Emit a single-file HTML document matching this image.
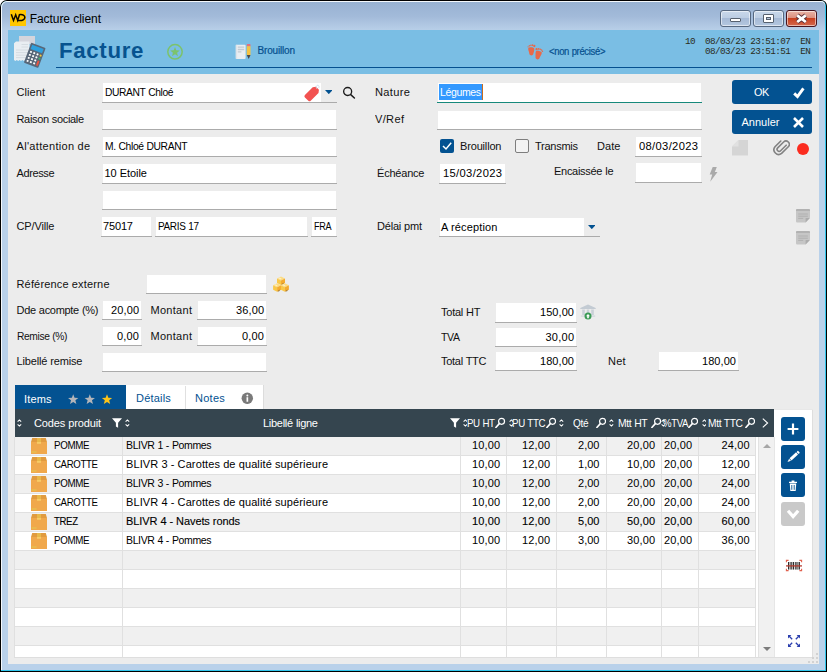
<!DOCTYPE html>
<html><head><meta charset="utf-8"><title>Facture client</title><style>
html,body{margin:0;padding:0;background:#fff;}
body{width:827px;height:672px;position:relative;overflow:hidden;font-family:"Liberation Sans",sans-serif;font-size:11px;}
.t{position:absolute;white-space:pre;}
.f{position:absolute;background:#fff;}
.fb{position:absolute;height:1px;}
.btn{position:absolute;background:#035291;border-radius:3px;}
</style></head><body>
<div style="position:absolute;left:0;top:0;width:827px;height:672px;background:#000;border-radius:7px 6px 0 0"></div>
<div style="position:absolute;left:1px;top:1px;width:825px;height:670px;background:#31c6ec;border-radius:6px 5px 0 0"></div>
<div style="position:absolute;left:1px;top:1px;width:824px;height:669px;background:#f4f8fc;border-radius:6px 4px 0 0"></div>
<div style="position:absolute;left:2px;top:2px;width:823px;height:668px;border-radius:5px 4px 0 0;background:linear-gradient(#98b2d2 0px,#a2bad9 14px,#b8cfe8 28px,#b9d1ea 60px,#b9d1ea 100%)"></div>
<div style="position:absolute;left:8px;top:30px;width:811px;height:634px;background:#ececec"></div>
<div style="position:absolute;left:10px;top:10px;width:16px;height:16px;background:#ffc600"></div>
<svg style="position:absolute;left:10px;top:10px" width="16" height="16" viewBox="0 0 16 16"><path d="M1.3 4.2 L3.5 10.4 L5.7 4.8 L7.7 10.4 L9.4 5" fill="none" stroke="#0c0800" stroke-width="1.5" stroke-linejoin="miter"/><path d="M8.8 4.7 C13.4 3.9 15.3 6 14.7 8 C14.1 10.3 11.2 10.9 7.4 10.4" fill="none" stroke="#0c0800" stroke-width="1.5"/></svg>
<span class="t" style="left:29.75px;top:13.24px;font-size:12px;line-height:12px;color:#000;letter-spacing:-0.065px;word-spacing:0.065px;">Facture client</span>
<div style="position:absolute;left:720px;top:10px;width:31px;height:17px;box-sizing:border-box;border:1px solid #566880;border-radius:3px;background:linear-gradient(#c9d8ea 0%,#bccde3 46%,#a6bad6 50%,#b4c7df 100%);box-shadow:inset 0 0 0 1px rgba(255,255,255,0.55)"></div>
<div style="position:absolute;left:753px;top:10px;width:31px;height:17px;box-sizing:border-box;border:1px solid #566880;border-radius:3px;background:linear-gradient(#c9d8ea 0%,#bccde3 46%,#a6bad6 50%,#b4c7df 100%);box-shadow:inset 0 0 0 1px rgba(255,255,255,0.55)"></div>
<div style="position:absolute;left:786px;top:10px;width:31px;height:17px;box-sizing:border-box;border:1px solid #47141e;border-radius:3px;background:linear-gradient(#e9b4a6 0%,#dc8f7e 46%,#c8401f 50%,#d4684e 100%);box-shadow:inset 0 0 0 1px rgba(255,255,255,0.55)"></div>
<div style="position:absolute;left:730px;top:18px;width:11px;height:4px;box-sizing:border-box;background:#fff;border:1px solid #56606e;border-radius:1px"></div>
<div style="position:absolute;left:763px;top:14px;width:11px;height:9px;box-sizing:border-box;background:#fff;border:1px solid #56606e;border-radius:1px"></div>
<div style="position:absolute;left:766px;top:17px;width:5px;height:3px;box-sizing:border-box;background:#b6c6dc;border:1px solid #56606e"></div>
<svg style="position:absolute;left:795px;top:13px" width="13" height="11" viewBox="0 0 13 11"><path d="M2.2 2.4 L10.8 9 M10.8 2.4 L2.2 9" stroke="#5a3038" stroke-width="4.6" stroke-linecap="butt"/><path d="M2.2 2.4 L10.8 9 M10.8 2.4 L2.2 9" stroke="#fff" stroke-width="2.8" stroke-linecap="butt"/></svg>
<div style="position:absolute;left:8px;top:30px;width:811px;height:44px;background:#7abee4"></div>
<div style="position:absolute;left:56px;top:67px;width:756px;height:1px;background:#05508f"></div>
<span class="t" style="left:58.82px;top:40.70px;font-size:21.5px;line-height:21.5px;color:#07538f;letter-spacing:0.645px;word-spacing:-0.645px;font-weight:700;transform:scaleX(1.0348);transform-origin:0 0;">Facture</span>
<span class="t" style="left:257.55px;top:46.33px;font-size:10px;line-height:10px;color:#06508f;letter-spacing:-0.183px;word-spacing:0.183px;-webkit-text-stroke:0.2px #06508f;">Brouillon</span>
<span class="t" style="left:548.55px;top:46.53px;font-size:10px;line-height:10px;color:#06508f;letter-spacing:-0.360px;word-spacing:0.360px;transform:scaleX(0.9499);transform-origin:0 0;-webkit-text-stroke:0.2px #06508f;">&lt;non précisé&gt;</span>
<span class="t" style="left:685.08px;top:36.73px;font-size:9.3px;line-height:9.3px;color:#2a2c20;letter-spacing:-0.574px;font-family:'Liberation Mono',monospace;white-space:pre;">10  08/03/23 23:51:07  EN</span>
<span class="t" style="left:685.08px;top:46.73px;font-size:9.3px;line-height:9.3px;color:#2a2c20;letter-spacing:-0.574px;font-family:'Liberation Mono',monospace;white-space:pre;">    08/03/23 23:51:51  EN</span>
<svg style="position:absolute;left:166px;top:43px" width="18" height="18" viewBox="0 0 18 18"><circle cx="9" cy="8.8" r="7.2" fill="none" stroke="#7cc36c" stroke-width="1.5"/><polygon points="9.00,4.10 10.29,7.32 13.76,7.55 11.09,9.78 11.94,13.15 9.00,11.30 6.06,13.15 6.91,9.78 4.24,7.55 7.71,7.32" fill="#7cc36c"/></svg>
<svg style="position:absolute;left:235px;top:43px" width="17" height="17" viewBox="0 0 17 17">
<rect x="0.8" y="1.8" width="9.8" height="14.2" rx="0.9" fill="#e9eef2"/><rect x="0.8" y="1.8" width="1.3" height="14.2" fill="#dde3e8"/>
<path d="M2.8 4.2 H9.2 M2.8 6.5 H9.2 M2.8 8.8 H6.4" stroke="#c3cad1" stroke-width="1.3"/>
<rect x="11.8" y="1" width="3.7" height="2.6" rx="0.8" fill="#e2707c"/><rect x="11.8" y="3.2" width="3.7" height="8.8" fill="#f6c343"/><path d="M11.8 12 H15.5 L13.65 15.9 Z" fill="#4a4a4a"/></svg>
<svg style="position:absolute;left:525px;top:42px" width="20" height="20" viewBox="0 0 20 20"><g fill="#e8694a"><path d="M3.2 6.6 C3.2 4.8 9.3 4.8 9.3 6.9 C9.3 9.2 8.5 10.6 8.3 12.1 C8.1 13.8 4.6 13.8 4.4 12.1 C4.2 10.2 3.2 8.6 3.2 6.6 Z"/><circle cx="9.3" cy="4" r="1.15"/><circle cx="7.5" cy="3.2" r="0.85"/><circle cx="5.9" cy="3.2" r="0.8"/><circle cx="4.4" cy="3.8" r="0.75"/><circle cx="3.1" cy="4.8" r="0.65"/><g transform="rotate(12 13 13)"><path d="M10.1 10.3 C10.1 8.3 16.3 8.3 16.3 10.3 C16.3 12.4 15.3 14 15.1 16 C14.9 17.9 11.3 17.9 11.1 16 C10.9 14.2 10.1 12.6 10.1 10.3 Z"/><circle cx="10.4" cy="7.6" r="1.15"/><circle cx="12.3" cy="6.9" r="0.85"/><circle cx="13.9" cy="6.9" r="0.8"/><circle cx="15.4" cy="7.4" r="0.75"/><circle cx="16.6" cy="8.4" r="0.65"/></g></g></svg>
<svg style="position:absolute;left:8px;top:30px" width="50" height="44" viewBox="0 0 50 44">
<rect x="11" y="6" width="16" height="8" fill="#d4d5dc"/>
<path d="M6 13.2 L8 11.6 H21.5 V31 L20 30 L18.6 31 L17.2 30 L15.8 31 L14.4 30 L13 31 L11.6 30 L10.2 31 L8.8 30 L7.4 31 L6 30 Z" fill="#e9eef2"/>
<path d="M13.5 14.5 H20 M13.5 17 H20 M8 20 H20 M8 22.6 H20 M8 25.2 H20 M8 27.6 H18" stroke="#d3d9df" stroke-width="0.9"/>
<g transform="translate(23.3 12.6) rotate(20.5)"><rect x="0" y="0" width="15.4" height="21.4" rx="1" fill="#586778"/><rect x="1.6" y="1.6" width="12.2" height="4.6" fill="#2d9fdd"/><rect x="2.0" y="8.0" width="1.9" height="1.8" rx="0.3" fill="#fff"/><rect x="5.5" y="8.0" width="1.9" height="1.8" rx="0.3" fill="#fff"/><rect x="9.0" y="8.0" width="1.9" height="1.8" rx="0.3" fill="#fff"/><rect x="2.0" y="11.2" width="1.9" height="1.8" rx="0.3" fill="#fff"/><rect x="5.5" y="11.2" width="1.9" height="1.8" rx="0.3" fill="#fff"/><rect x="9.0" y="11.2" width="1.9" height="1.8" rx="0.3" fill="#fff"/><rect x="2.0" y="14.4" width="1.9" height="1.8" rx="0.3" fill="#fff"/><rect x="5.5" y="14.4" width="1.9" height="1.8" rx="0.3" fill="#fff"/><rect x="9.0" y="14.4" width="1.9" height="1.8" rx="0.3" fill="#fff"/><rect x="2.0" y="17.6" width="1.9" height="1.8" rx="0.3" fill="#fff"/><rect x="5.5" y="17.6" width="1.9" height="1.8" rx="0.3" fill="#fff"/><rect x="9.0" y="17.6" width="1.9" height="1.8" rx="0.3" fill="#fff"/>
<rect x="12.3" y="8" width="1.9" height="1.8" rx="0.3" fill="#f4c838"/><rect x="12.3" y="11.2" width="1.9" height="1.8" rx="0.3" fill="#3db86e"/><rect x="12.3" y="14.4" width="1.9" height="5.2" rx="0.4" fill="#ea5440"/></g></svg>
<span class="t" style="left:16.50px;top:86.69px;font-size:11px;line-height:11px;color:#111;letter-spacing:0.075px;word-spacing:-0.075px;">Client</span>
<span class="t" style="left:16.50px;top:113.69px;font-size:11px;line-height:11px;color:#111;letter-spacing:-0.337px;word-spacing:0.337px;">Raison sociale</span>
<span class="t" style="left:16.50px;top:140.69px;font-size:11px;line-height:11px;color:#111;letter-spacing:0.317px;word-spacing:-0.317px;">Al'attention de</span>
<span class="t" style="left:16.50px;top:167.69px;font-size:11px;line-height:11px;color:#111;letter-spacing:-0.393px;word-spacing:0.393px;">Adresse</span>
<span class="t" style="left:16.50px;top:220.69px;font-size:11px;line-height:11px;color:#111;letter-spacing:-0.134px;word-spacing:0.134px;">CP/Ville</span>
<span class="t" style="left:16.50px;top:278.69px;font-size:11px;line-height:11px;color:#111;letter-spacing:0.167px;word-spacing:-0.167px;">Référence externe</span>
<span class="t" style="left:16.50px;top:304.69px;font-size:11px;line-height:11px;color:#111;letter-spacing:-0.299px;word-spacing:0.299px;">Dde acompte (%)</span>
<span class="t" style="left:16.50px;top:330.69px;font-size:11px;line-height:11px;color:#111;letter-spacing:-0.396px;word-spacing:0.396px;transform:scaleX(0.9303);transform-origin:0 0;">Remise (%)</span>
<span class="t" style="left:16.50px;top:355.69px;font-size:11px;line-height:11px;color:#111;letter-spacing:-0.156px;word-spacing:0.156px;">Libellé remise</span>
<span class="t" style="left:150.50px;top:304.69px;font-size:11px;line-height:11px;color:#111;letter-spacing:0.292px;word-spacing:-0.292px;">Montant</span>
<span class="t" style="left:150.50px;top:330.69px;font-size:11px;line-height:11px;color:#111;letter-spacing:0.292px;word-spacing:-0.292px;">Montant</span>
<div class="f" style="left:103px;top:83px;width:218px;height:19px"></div>
<div class="fb" style="left:102px;top:102px;width:235px;background:#ababab"></div>
<div class="f" style="left:103px;top:110px;width:233px;height:19px"></div>
<div class="fb" style="left:102px;top:129px;width:235px;background:#ababab"></div>
<div class="f" style="left:103px;top:137px;width:233px;height:19px"></div>
<div class="fb" style="left:102px;top:156px;width:235px;background:#ababab"></div>
<div class="f" style="left:103px;top:164px;width:233px;height:19px"></div>
<div class="fb" style="left:102px;top:183px;width:235px;background:#ababab"></div>
<div class="f" style="left:103px;top:191px;width:233px;height:18px"></div>
<div class="fb" style="left:102px;top:209px;width:235px;background:#ababab"></div>
<div class="f" style="left:102px;top:217px;width:49px;height:19px"></div>
<div class="fb" style="left:101px;top:236px;width:51px;background:#ababab"></div>
<div class="f" style="left:156px;top:217px;width:151px;height:19px"></div>
<div class="fb" style="left:155px;top:236px;width:153px;background:#ababab"></div>
<div class="f" style="left:312px;top:217px;width:24px;height:19px"></div>
<div class="fb" style="left:311px;top:236px;width:26px;background:#ababab"></div>
<div class="f" style="left:147px;top:275px;width:119px;height:18px"></div>
<div class="fb" style="left:146px;top:293px;width:121px;background:#ababab"></div>
<div class="f" style="left:103px;top:301px;width:38px;height:18px"></div>
<div class="fb" style="left:102px;top:319px;width:40px;background:#ababab"></div>
<div class="f" style="left:198px;top:301px;width:68px;height:18px"></div>
<div class="fb" style="left:197px;top:319px;width:70px;background:#ababab"></div>
<div class="f" style="left:103px;top:327px;width:38px;height:18px"></div>
<div class="fb" style="left:102px;top:345px;width:40px;background:#ababab"></div>
<div class="f" style="left:198px;top:327px;width:68px;height:18px"></div>
<div class="fb" style="left:197px;top:345px;width:70px;background:#ababab"></div>
<div class="f" style="left:103px;top:353px;width:163px;height:18px"></div>
<div class="fb" style="left:102px;top:371px;width:165px;background:#ababab"></div>
<span class="t" style="left:104.50px;top:86.69px;font-size:11px;line-height:11px;color:#000;letter-spacing:-0.396px;word-spacing:0.396px;transform:scaleX(0.9323);transform-origin:0 0;">DURANT Chloé</span>
<span class="t" style="left:104.50px;top:140.69px;font-size:11px;line-height:11px;color:#000;letter-spacing:-0.396px;word-spacing:0.396px;transform:scaleX(0.9359);transform-origin:0 0;">M. Chloé DURANT</span>
<span class="t" style="left:104.50px;top:167.69px;font-size:11px;line-height:11px;color:#000;letter-spacing:-0.045px;word-spacing:0.045px;">10 Etoile</span>
<span class="t" style="left:103.10px;top:220.89px;font-size:11px;line-height:11px;color:#000;letter-spacing:-0.173px;word-spacing:0.173px;">75017</span>
<span class="t" style="left:157.50px;top:220.89px;font-size:11px;line-height:11px;color:#000;letter-spacing:-0.396px;word-spacing:0.396px;transform:scaleX(0.9086);transform-origin:0 0;">PARIS 17</span>
<span class="t" style="left:313.50px;top:220.89px;font-size:11px;line-height:11px;color:#000;letter-spacing:-0.396px;word-spacing:0.396px;transform:scaleX(0.8252);transform-origin:0 0;">FRA</span>
<span class="t" style="left:111.00px;top:304.69px;font-size:11px;line-height:11px;color:#000;letter-spacing:0.117px;word-spacing:-0.117px;">20,00</span>
<span class="t" style="left:236.00px;top:304.69px;font-size:11px;line-height:11px;color:#000;letter-spacing:0.117px;word-spacing:-0.117px;">36,00</span>
<span class="t" style="left:117.00px;top:330.69px;font-size:11px;line-height:11px;color:#000;letter-spacing:0.193px;word-spacing:-0.193px;">0,00</span>
<span class="t" style="left:242.00px;top:330.69px;font-size:11px;line-height:11px;color:#000;letter-spacing:0.193px;word-spacing:-0.193px;">0,00</span>
<span class="t" style="left:375.00px;top:86.69px;font-size:11px;line-height:11px;color:#111;letter-spacing:0.330px;word-spacing:-0.330px;transform:scaleX(1.0092);transform-origin:0 0;">Nature</span>
<span class="t" style="left:375.00px;top:114.49px;font-size:11px;line-height:11px;color:#111;letter-spacing:0.330px;word-spacing:-0.330px;transform:scaleX(1.0057);transform-origin:0 0;">V/Ref</span>
<span class="t" style="left:377.00px;top:167.69px;font-size:11px;line-height:11px;color:#111;letter-spacing:-0.205px;word-spacing:0.205px;">Échéance</span>
<span class="t" style="left:377.00px;top:221.19px;font-size:11px;line-height:11px;color:#111;letter-spacing:-0.210px;word-spacing:0.210px;">Délai pmt</span>
<span class="t" style="left:460.00px;top:140.79px;font-size:11px;line-height:11px;color:#111;letter-spacing:-0.164px;word-spacing:0.164px;">Brouillon</span>
<span class="t" style="left:535.00px;top:140.79px;font-size:11px;line-height:11px;color:#111;letter-spacing:-0.261px;word-spacing:0.261px;">Transmis</span>
<span class="t" style="left:597.00px;top:140.79px;font-size:11px;line-height:11px;color:#111;letter-spacing:0.083px;word-spacing:-0.083px;">Date</span>
<span class="t" style="left:554.00px;top:166.19px;font-size:11px;line-height:11px;color:#111;letter-spacing:-0.287px;word-spacing:0.287px;">Encaissée le</span>
<span class="t" style="left:441.00px;top:306.69px;font-size:11px;line-height:11px;color:#111;letter-spacing:-0.245px;word-spacing:0.245px;">Total HT</span>
<span class="t" style="left:441.00px;top:331.69px;font-size:11px;line-height:11px;color:#111;letter-spacing:-0.396px;word-spacing:0.396px;transform:scaleX(0.9603);transform-origin:0 0;">TVA</span>
<span class="t" style="left:441.00px;top:355.69px;font-size:11px;line-height:11px;color:#111;letter-spacing:-0.283px;word-spacing:0.283px;">Total TTC</span>
<span class="t" style="left:608.00px;top:355.69px;font-size:11px;line-height:11px;color:#111;letter-spacing:0.188px;word-spacing:-0.188px;">Net</span>
<div class="f" style="left:438px;top:83px;width:263px;height:19px"></div>
<div class="fb" style="left:437px;top:102px;width:265px;background:#17897b"></div>
<div class="f" style="left:438px;top:111px;width:263px;height:18px"></div>
<div class="fb" style="left:437px;top:129px;width:265px;background:#ababab"></div>
<div class="f" style="left:636px;top:137px;width:65px;height:19px"></div>
<div class="fb" style="left:635px;top:156px;width:67px;background:#ababab"></div>
<div class="f" style="left:440px;top:164px;width:65px;height:19px"></div>
<div class="fb" style="left:439px;top:183px;width:67px;background:#ababab"></div>
<div class="f" style="left:636px;top:163px;width:65px;height:19px"></div>
<div class="fb" style="left:635px;top:182px;width:67px;background:#ababab"></div>
<div class="f" style="left:440px;top:218px;width:144px;height:18px"></div>
<div class="fb" style="left:439px;top:236px;width:161px;background:#ababab"></div>
<div class="f" style="left:496px;top:303px;width:80px;height:19px"></div>
<div class="fb" style="left:495px;top:322px;width:82px;background:#ababab"></div>
<div class="f" style="left:496px;top:328px;width:80px;height:18px"></div>
<div class="fb" style="left:495px;top:346px;width:82px;background:#ababab"></div>
<div class="f" style="left:496px;top:352px;width:80px;height:18px"></div>
<div class="fb" style="left:495px;top:370px;width:82px;background:#ababab"></div>
<div class="f" style="left:659px;top:352px;width:79px;height:18px"></div>
<div class="fb" style="left:658px;top:370px;width:81px;background:#ababab"></div>
<div style="position:absolute;left:439px;top:84px;width:43px;height:16px;background:#3399ff"></div>
<div style="position:absolute;left:482px;top:84px;width:1px;height:16px;background:#cc6d1e"></div>
<span class="t" style="left:440.00px;top:86.69px;font-size:11px;line-height:11px;color:#fff;letter-spacing:-0.396px;word-spacing:0.396px;transform:scaleX(0.9559);transform-origin:0 0;">Légumes</span>
<span class="t" style="left:639.00px;top:140.69px;font-size:11px;line-height:11px;color:#000;letter-spacing:0.330px;word-spacing:-0.330px;transform:scaleX(1.0167);transform-origin:0 0;">08/03/2023</span>
<span class="t" style="left:443.00px;top:167.69px;font-size:11px;line-height:11px;color:#000;letter-spacing:0.330px;word-spacing:-0.330px;transform:scaleX(1.0167);transform-origin:0 0;">15/03/2023</span>
<span class="t" style="left:441.00px;top:221.69px;font-size:11px;line-height:11px;color:#000;letter-spacing:0.161px;word-spacing:-0.161px;">A réception</span>
<span class="t" style="left:540.00px;top:306.69px;font-size:11px;line-height:11px;color:#000;letter-spacing:0.069px;word-spacing:-0.069px;">150,00</span>
<span class="t" style="left:545.50px;top:331.69px;font-size:11px;line-height:11px;color:#000;letter-spacing:0.242px;word-spacing:-0.242px;">30,00</span>
<span class="t" style="left:540.00px;top:355.69px;font-size:11px;line-height:11px;color:#000;letter-spacing:0.069px;word-spacing:-0.069px;">180,00</span>
<span class="t" style="left:702.00px;top:355.69px;font-size:11px;line-height:11px;color:#000;letter-spacing:0.069px;word-spacing:-0.069px;">180,00</span>
<div class="btn" style="left:732px;top:80px;width:80px;height:24px"></div>
<div class="btn" style="left:732px;top:110px;width:80px;height:24px"></div>
<span class="t" style="left:754.10px;top:87.19px;font-size:11px;line-height:11px;color:#fff;letter-spacing:-0.396px;word-spacing:0.396px;transform:scaleX(0.9864);transform-origin:0 0;">OK</span>
<span class="t" style="left:741.50px;top:117.19px;font-size:11px;line-height:11px;color:#fff;letter-spacing:0.013px;word-spacing:-0.013px;">Annuler</span>
<svg style="position:absolute;left:792px;top:86px" width="14" height="14" viewBox="0 0 14 14"><path d="M2.2 7.4 L5.5 10.6 L11.4 2.4" fill="none" stroke="#fff" stroke-width="2.9" stroke-linecap="butt" stroke-linejoin="miter"/></svg>
<svg style="position:absolute;left:792px;top:116px" width="14" height="14" viewBox="0 0 14 14"><path d="M2 2 L11 11 M11 2 L2 11" fill="none" stroke="#fff" stroke-width="2.6" stroke-linecap="butt"/></svg>
<div style="position:absolute;left:440px;top:139px;width:14px;height:14px;border-radius:2px;background:#035291"></div>
<svg style="position:absolute;left:440px;top:139px" width="14" height="14" viewBox="0 0 14 14"><path d="M3 7 L6 10 L11.2 3.8" fill="none" stroke="#fff" stroke-width="1.5"/></svg>
<div style="position:absolute;left:515px;top:139px;width:12px;height:12px;border-radius:2px;background:#f3f3f3;border:1px solid #7e7e7e"></div>
<svg style="position:absolute;left:324.8px;top:90px" width="7.6" height="4.2" viewBox="0 0 8 4.4"><path d="M0 0 H8 L4 4.4 Z" fill="#035291"/></svg>
<svg style="position:absolute;left:587.8px;top:225px" width="7.6" height="4.2" viewBox="0 0 8 4.4"><path d="M0 0 H8 L4 4.4 Z" fill="#035291"/></svg>
<svg style="position:absolute;left:302px;top:83px" width="20" height="20" viewBox="0 0 20 20">
<g transform="rotate(45 10 10.7)"><path d="M5.9 5.6 L7.9 3 H12.1 L14.1 5.6 V16.6 a1.7 1.7 0 0 1 -1.7 1.7 H7.6 a1.7 1.7 0 0 1 -1.7 -1.7 Z" fill="#f25251"/></g>
<path d="M14.6 5.6 C13.4 3.2 15.4 1.4 16.6 2.6 C17.4 3.4 17 4.6 16.4 5" fill="none" stroke="#c9dcef" stroke-width="0.9"/></svg>
<svg style="position:absolute;left:341px;top:85px" width="16" height="16" viewBox="0 0 16 16"><circle cx="6.65" cy="6.5" r="4" fill="none" stroke="#1c1c1c" stroke-width="1.35"/><path d="M9.7 9.6 L13.4 13" stroke="#1c1c1c" stroke-width="1.5" stroke-linecap="round"/></svg>
<svg style="position:absolute;left:732px;top:140px" width="16" height="16" viewBox="0 0 16 16"><path d="M6.5 0 H16 V15.6 H0 V6.5 Z" fill="#d5d5d5"/><path d="M0 6.5 H6.5 V0 Z" fill="#e1e1e1"/></svg>
<svg style="position:absolute;left:773px;top:139px" width="17" height="17" viewBox="0 0 17 17"><path d="M13.2 6.2 L7.6 11.8 a2 2 0 0 1 -2.9 -2.9 L10.6 3 a3.3 3.3 0 0 1 4.7 4.7 L8.6 14.4 a4.7 4.7 0 0 1 -6.6 -6.6 L7.8 2" fill="none" stroke="#828282" stroke-width="1.6" stroke-linecap="round"/></svg>
<div style="position:absolute;left:796.8px;top:142.6px;width:12.4px;height:12.4px;border-radius:50%;background:#fb2c1f"></div>
<svg style="position:absolute;left:709.4px;top:167px" width="9.2" height="15.2" viewBox="0 0 10 17"><path d="M4 0 H8.6 L6.4 5.6 H9.4 L1.2 16.6 L3.4 8.4 H0.6 Z" fill="#aaaaaa"/></svg>
<svg style="position:absolute;left:796px;top:209px" width="14" height="13.5" viewBox="0 0 14 13.5"><path d="M1.3 0 H12.7 a1.3 1.3 0 0 1 1.3 1.3 V8.6 L9.6 13.5 H1.3 A1.3 1.3 0 0 1 0 12.2 V1.3 A1.3 1.3 0 0 1 1.3 0 Z" fill="#c6c6c6"/><path d="M1.3 0 H12.7 a1.3 1.3 0 0 1 1.3 1.3 V1.9 H0 V1.3 A1.3 1.3 0 0 1 1.3 0 Z" fill="#b2b2b2"/><path d="M9.6 13.5 V9 H14 Z" fill="#adadad"/><path d="M2.2 5 H11.8 M2.2 7.2 H11.8 M2.2 9.4 H7.2" stroke="#aeaeae" stroke-width="0.9"/></svg>
<svg style="position:absolute;left:796px;top:231px" width="14" height="13.5" viewBox="0 0 14 13.5"><path d="M1.3 0 H12.7 a1.3 1.3 0 0 1 1.3 1.3 V8.6 L9.6 13.5 H1.3 A1.3 1.3 0 0 1 0 12.2 V1.3 A1.3 1.3 0 0 1 1.3 0 Z" fill="#c6c6c6"/><path d="M1.3 0 H12.7 a1.3 1.3 0 0 1 1.3 1.3 V1.9 H0 V1.3 A1.3 1.3 0 0 1 1.3 0 Z" fill="#b2b2b2"/><path d="M9.6 13.5 V9 H14 Z" fill="#adadad"/><path d="M2.2 5 H11.8 M2.2 7.2 H11.8 M2.2 9.4 H7.2" stroke="#aeaeae" stroke-width="0.9"/></svg>
<svg style="position:absolute;left:272px;top:276px" width="18" height="17" viewBox="0 0 18 17"><path d="M9 0.40000000000000036 L13 2.4000000000000004 L9 4.4 L5 2.4000000000000004 Z" fill="#fcdc82"/><path d="M5 2.4000000000000004 L9 4.4 V9.0 L5 7.0 Z" fill="#f9c847"/><path d="M13 2.4000000000000004 L9 4.4 V9.0 L13 7.0 Z" fill="#f4ab2e"/><path d="M9.8 8.0 L11.6 6.800000000000001 V8.200000000000001 L9.8 9.0 Z" fill="#8a6a30" opacity="0.75"/><path d="M7.4 1.4000000000000004 L9.6 2.6000000000000005 L8.4 3.4000000000000004 L6.2 2.2 Z" fill="#fff3cf" opacity="0.8"/><path d="M5.1 7.199999999999999 L9.1 9.2 L5.1 11.2 L1.0999999999999996 9.2 Z" fill="#fcdc82"/><path d="M1.0999999999999996 9.2 L5.1 11.2 V15.799999999999999 L1.0999999999999996 13.799999999999999 Z" fill="#f9c847"/><path d="M9.1 9.2 L5.1 11.2 V15.799999999999999 L9.1 13.799999999999999 Z" fill="#f4ab2e"/><path d="M5.8999999999999995 14.799999999999999 L7.699999999999999 13.6 V15.0 L5.8999999999999995 15.799999999999999 Z" fill="#8a6a30" opacity="0.75"/><path d="M3.4999999999999996 8.2 L5.699999999999999 9.399999999999999 L4.5 10.2 L2.3 9.0 Z" fill="#fff3cf" opacity="0.8"/><path d="M12.9 7.199999999999999 L16.9 9.2 L12.9 11.2 L8.9 9.2 Z" fill="#fcdc82"/><path d="M8.9 9.2 L12.9 11.2 V15.799999999999999 L8.9 13.799999999999999 Z" fill="#f9c847"/><path d="M16.9 9.2 L12.9 11.2 V15.799999999999999 L16.9 13.799999999999999 Z" fill="#f4ab2e"/><path d="M13.700000000000001 14.799999999999999 L15.5 13.6 V15.0 L13.700000000000001 15.799999999999999 Z" fill="#8a6a30" opacity="0.75"/><path d="M11.3 8.2 L13.5 9.399999999999999 L12.3 10.2 L10.100000000000001 9.0 Z" fill="#fff3cf" opacity="0.8"/></svg>
<svg style="position:absolute;left:580px;top:304px" width="16" height="16" viewBox="0 0 16 16">
<path d="M8 0.6 L15.7 4 V4.9 H0.3 V4 Z" fill="#c3cbd3"/><path d="M2.2 5.4 H4.8 V11 H2.2 Z M6.8 5.4 H9.2 V11 H6.8 Z M11.2 5.4 H13.8 V11 H11.2 Z" fill="#c9d0d7"/><path d="M0.8 11.4 H15.2 V12.8 H0.8 Z" fill="#d3d9de"/>
<circle cx="8" cy="12.1" r="3.5" fill="#3c9b56"/><path d="M8 10 L10 12.2 H8.8 V14.2 H7.2 V12.2 H6 Z" fill="#fff"/></svg>
<div style="position:absolute;left:15px;top:409px;width:798px;height:249px;background:#fff"></div>
<div style="position:absolute;left:812px;top:409px;width:1px;height:249px;background:#dedede"></div>
<div style="position:absolute;left:14px;top:657px;width:799px;height:1px;background:#dedede"></div>
<div style="position:absolute;left:774px;top:409px;width:39px;height:1px;background:#e8e8e8"></div>
<div style="position:absolute;left:15px;top:385px;width:111px;height:24px;background:#035291"></div>
<div style="position:absolute;left:126px;top:385px;width:138px;height:24px;background:#fff"></div>
<div style="position:absolute;left:185px;top:386px;width:1px;height:23px;background:#e0e0e0"></div>
<div style="position:absolute;left:263px;top:385px;width:1px;height:24px;background:#dcdcdc"></div>
<span class="t" style="left:24.00px;top:393.69px;font-size:11px;line-height:11px;color:#fff;letter-spacing:0.148px;word-spacing:-0.148px;">Items</span>
<span class="t" style="left:136.00px;top:392.79px;font-size:11px;line-height:11px;color:#035291;letter-spacing:0.196px;word-spacing:-0.196px;">Détails</span>
<span class="t" style="left:195.00px;top:392.79px;font-size:11px;line-height:11px;color:#035291;letter-spacing:0.263px;word-spacing:-0.263px;">Notes</span>
<svg style="position:absolute;left:60px;top:390px" width="60" height="18" viewBox="0 0 60 18"><polygon points="13.20,4.20 14.55,7.74 18.34,7.93 15.39,10.31 16.37,13.97 13.20,11.90 10.03,13.97 11.01,10.31 8.06,7.93 11.85,7.74" fill="#b3b5b9"/><polygon points="29.80,4.20 31.15,7.74 34.94,7.93 31.99,10.31 32.97,13.97 29.80,11.90 26.63,13.97 27.61,10.31 24.66,7.93 28.45,7.74" fill="#b3b5b9"/><polygon points="47.00,4.20 48.35,7.74 52.14,7.93 49.19,10.31 50.17,13.97 47.00,11.90 43.83,13.97 44.81,10.31 41.86,7.93 45.65,7.74" fill="#fcc419"/></svg>
<svg style="position:absolute;left:241.4px;top:391.6px" width="12.8" height="12.8" viewBox="0 0 13 13"><circle cx="6.4" cy="6.4" r="5.8" fill="#7a7a7a"/><rect x="5.6" y="5.3" width="1.7" height="4.6" fill="#fff"/><circle cx="6.45" cy="3.5" r="1" fill="#fff"/></svg>
<div style="position:absolute;left:15px;top:409px;width:759px;height:28px;background:#35454f"></div>
<span class="t" style="left:34.00px;top:417.79px;font-size:11px;line-height:11px;color:#fff;letter-spacing:-0.136px;word-spacing:0.136px;">Codes produit</span>
<span class="t" style="left:263.00px;top:417.79px;font-size:11px;line-height:11px;color:#fff;letter-spacing:-0.283px;word-spacing:0.283px;">Libellé ligne</span>
<span class="t" style="left:467.00px;top:417.79px;font-size:11px;line-height:11px;color:#fff;letter-spacing:-0.396px;word-spacing:0.396px;transform:scaleX(0.8802);transform-origin:0 0;">PU HT</span>
<span class="t" style="left:512.00px;top:417.79px;font-size:11px;line-height:11px;color:#fff;letter-spacing:-0.396px;word-spacing:0.396px;transform:scaleX(0.8828);transform-origin:0 0;">PU TTC</span>
<span class="t" style="left:573.00px;top:417.79px;font-size:11px;line-height:11px;color:#fff;letter-spacing:-0.396px;word-spacing:0.396px;transform:scaleX(0.9149);transform-origin:0 0;">Qté</span>
<span class="t" style="left:617.90px;top:417.79px;font-size:11px;line-height:11px;color:#fff;letter-spacing:-0.396px;word-spacing:0.396px;transform:scaleX(0.9454);transform-origin:0 0;">Mtt HT</span>
<span class="t" style="left:662.50px;top:417.79px;font-size:11px;line-height:11px;color:#fff;letter-spacing:-0.396px;word-spacing:0.396px;transform:scaleX(0.8741);transform-origin:0 0;">%TVA</span>
<span class="t" style="left:708.10px;top:417.79px;font-size:11px;line-height:11px;color:#fff;letter-spacing:-0.396px;word-spacing:0.396px;transform:scaleX(0.9298);transform-origin:0 0;">Mtt TTC</span>
<svg style="position:absolute;left:17px;top:418.6px" width="4.8" height="8" viewBox="0 0 5 9"><path d="M0.5 3 L2.5 1 L4.5 3 M0.5 6 L2.5 8 L4.5 6" fill="none" stroke="#fff" stroke-width="1.2"/></svg>
<svg style="position:absolute;left:125px;top:418.6px" width="4.8" height="8" viewBox="0 0 5 9"><path d="M0.5 3 L2.5 1 L4.5 3 M0.5 6 L2.5 8 L4.5 6" fill="none" stroke="#fff" stroke-width="1.2"/></svg>
<svg style="position:absolute;left:462.5px;top:418.6px" width="4.8" height="8" viewBox="0 0 5 9"><path d="M0.5 3 L2.5 1 L4.5 3 M0.5 6 L2.5 8 L4.5 6" fill="none" stroke="#fff" stroke-width="1.2"/></svg>
<svg style="position:absolute;left:508.5px;top:418.6px" width="4.8" height="8" viewBox="0 0 5 9"><path d="M0.5 3 L2.5 1 L4.5 3 M0.5 6 L2.5 8 L4.5 6" fill="none" stroke="#fff" stroke-width="1.2"/></svg>
<svg style="position:absolute;left:559px;top:418.6px" width="4.8" height="8" viewBox="0 0 5 9"><path d="M0.5 3 L2.5 1 L4.5 3 M0.5 6 L2.5 8 L4.5 6" fill="none" stroke="#fff" stroke-width="1.2"/></svg>
<svg style="position:absolute;left:609px;top:418.6px" width="4.8" height="8" viewBox="0 0 5 9"><path d="M0.5 3 L2.5 1 L4.5 3 M0.5 6 L2.5 8 L4.5 6" fill="none" stroke="#fff" stroke-width="1.2"/></svg>
<svg style="position:absolute;left:661px;top:418.6px" width="4.8" height="8" viewBox="0 0 5 9"><path d="M0.5 3 L2.5 1 L4.5 3 M0.5 6 L2.5 8 L4.5 6" fill="none" stroke="#fff" stroke-width="1.2"/></svg>
<svg style="position:absolute;left:701.5px;top:418.6px" width="4.8" height="8" viewBox="0 0 5 9"><path d="M0.5 3 L2.5 1 L4.5 3 M0.5 6 L2.5 8 L4.5 6" fill="none" stroke="#fff" stroke-width="1.2"/></svg>
<svg style="position:absolute;left:112px;top:418px" width="10" height="10" viewBox="0 0 10 10"><path d="M0 0.3 H10 L6.1 4.8 V9.8 L3.9 8.6 V4.8 Z" fill="#fff"/></svg>
<svg style="position:absolute;left:450px;top:418px" width="10" height="10" viewBox="0 0 10 10"><path d="M0 0.3 H10 L6.1 4.8 V9.8 L3.9 8.6 V4.8 Z" fill="#fff"/></svg>
<svg style="position:absolute;left:495.4px;top:417.3px" width="10.5" height="11.2" viewBox="0 0 11 12"><circle cx="6.9" cy="4.6" r="3.2" fill="none" stroke="#fff" stroke-width="1.3"/><path d="M4.5 7.1 L0.8 11.2" stroke="#fff" stroke-width="1.7" stroke-linecap="round"/></svg>
<svg style="position:absolute;left:545.9px;top:417.3px" width="10.5" height="11.2" viewBox="0 0 11 12"><circle cx="6.9" cy="4.6" r="3.2" fill="none" stroke="#fff" stroke-width="1.3"/><path d="M4.5 7.1 L0.8 11.2" stroke="#fff" stroke-width="1.7" stroke-linecap="round"/></svg>
<svg style="position:absolute;left:595.9px;top:417.3px" width="10.5" height="11.2" viewBox="0 0 11 12"><circle cx="6.9" cy="4.6" r="3.2" fill="none" stroke="#fff" stroke-width="1.3"/><path d="M4.5 7.1 L0.8 11.2" stroke="#fff" stroke-width="1.7" stroke-linecap="round"/></svg>
<svg style="position:absolute;left:651.4px;top:417.3px" width="10.5" height="11.2" viewBox="0 0 11 12"><circle cx="6.9" cy="4.6" r="3.2" fill="none" stroke="#fff" stroke-width="1.3"/><path d="M4.5 7.1 L0.8 11.2" stroke="#fff" stroke-width="1.7" stroke-linecap="round"/></svg>
<svg style="position:absolute;left:687.9px;top:417.3px" width="10.5" height="11.2" viewBox="0 0 11 12"><circle cx="6.9" cy="4.6" r="3.2" fill="none" stroke="#fff" stroke-width="1.3"/><path d="M4.5 7.1 L0.8 11.2" stroke="#fff" stroke-width="1.7" stroke-linecap="round"/></svg>
<svg style="position:absolute;left:744.9px;top:417.3px" width="10.5" height="11.2" viewBox="0 0 11 12"><circle cx="6.9" cy="4.6" r="3.2" fill="none" stroke="#fff" stroke-width="1.3"/><path d="M4.5 7.1 L0.8 11.2" stroke="#fff" stroke-width="1.7" stroke-linecap="round"/></svg>
<svg style="position:absolute;left:762px;top:418px" width="7" height="10" viewBox="0 0 7 10"><path d="M0.8 0.6 L5.6 5 L0.8 9.4" fill="none" stroke="#fff" stroke-width="1.1"/></svg>
<div style="position:absolute;left:15px;top:437px;width:740px;height:18px;background:#f0f0f0"></div>
<div style="position:absolute;left:15px;top:455px;width:741px;height:1px;background:#e0e0e0"></div>
<div style="position:absolute;left:15px;top:456px;width:740px;height:18px;background:#fff"></div>
<div style="position:absolute;left:15px;top:474px;width:741px;height:1px;background:#e0e0e0"></div>
<div style="position:absolute;left:15px;top:475px;width:740px;height:18px;background:#f0f0f0"></div>
<div style="position:absolute;left:15px;top:493px;width:741px;height:1px;background:#e0e0e0"></div>
<div style="position:absolute;left:15px;top:494px;width:740px;height:18px;background:#fff"></div>
<div style="position:absolute;left:15px;top:512px;width:741px;height:1px;background:#e0e0e0"></div>
<div style="position:absolute;left:15px;top:513px;width:740px;height:18px;background:#f0f0f0"></div>
<div style="position:absolute;left:15px;top:531px;width:741px;height:1px;background:#e0e0e0"></div>
<div style="position:absolute;left:15px;top:532px;width:740px;height:18px;background:#fff"></div>
<div style="position:absolute;left:15px;top:550px;width:741px;height:1px;background:#e0e0e0"></div>
<div style="position:absolute;left:15px;top:551px;width:740px;height:18px;background:#f0f0f0"></div>
<div style="position:absolute;left:15px;top:569px;width:741px;height:1px;background:#e0e0e0"></div>
<div style="position:absolute;left:15px;top:570px;width:740px;height:18px;background:#fff"></div>
<div style="position:absolute;left:15px;top:588px;width:741px;height:1px;background:#e0e0e0"></div>
<div style="position:absolute;left:15px;top:589px;width:740px;height:18px;background:#f0f0f0"></div>
<div style="position:absolute;left:15px;top:607px;width:741px;height:1px;background:#e0e0e0"></div>
<div style="position:absolute;left:15px;top:608px;width:740px;height:18px;background:#fff"></div>
<div style="position:absolute;left:15px;top:626px;width:741px;height:1px;background:#e0e0e0"></div>
<div style="position:absolute;left:15px;top:627px;width:740px;height:18px;background:#f0f0f0"></div>
<div style="position:absolute;left:15px;top:645px;width:741px;height:1px;background:#e0e0e0"></div>
<div style="position:absolute;left:15px;top:646px;width:740px;height:11px;background:#fff"></div>
<div style="position:absolute;left:14px;top:437px;width:1px;height:220px;background:#e0e0e0"></div>
<div style="position:absolute;left:755px;top:437px;width:1px;height:220px;background:#e0e0e0"></div>
<div style="position:absolute;left:122px;top:437px;width:1px;height:220px;background:#e0e0e0"></div>
<div style="position:absolute;left:460px;top:437px;width:1px;height:220px;background:#e0e0e0"></div>
<div style="position:absolute;left:506px;top:437px;width:1px;height:220px;background:#e0e0e0"></div>
<div style="position:absolute;left:556px;top:437px;width:1px;height:220px;background:#e0e0e0"></div>
<div style="position:absolute;left:606px;top:437px;width:1px;height:220px;background:#e0e0e0"></div>
<div style="position:absolute;left:661px;top:437px;width:1px;height:220px;background:#e0e0e0"></div>
<div style="position:absolute;left:698px;top:437px;width:1px;height:220px;background:#e0e0e0"></div>
<svg style="position:absolute;left:31px;top:438px" width="16" height="16" viewBox="0 0 16 16"><path d="M0 4 L1.2 0 H14.8 L16 4 Z" fill="#e19b3f"/><rect x="0" y="4" width="16" height="12" fill="#f0a84c"/><rect x="6" y="0" width="4" height="4" fill="#e8b84a"/><rect x="6" y="4" width="4" height="1.8" fill="#f7cb66"/><rect x="0.6" y="13" width="5" height="2" fill="#e9b94f"/></svg>
<span class="t" style="left:54.00px;top:439.69px;font-size:11px;line-height:11px;color:#000;letter-spacing:-0.396px;word-spacing:0.396px;transform:scaleX(0.8880);transform-origin:0 0;">POMME</span>
<span class="t" style="left:126.00px;top:439.69px;font-size:11px;line-height:11px;color:#000;letter-spacing:-0.396px;word-spacing:0.396px;transform:scaleX(0.9565);transform-origin:0 0;">BLIVR 1 - Pommes</span>
<span class="t" style="left:472.00px;top:439.69px;font-size:11px;line-height:11px;color:#000;letter-spacing:0.117px;word-spacing:-0.117px;">10,00</span>
<span class="t" style="left:522.00px;top:439.69px;font-size:11px;line-height:11px;color:#000;letter-spacing:0.117px;word-spacing:-0.117px;">12,00</span>
<span class="t" style="left:578.00px;top:439.69px;font-size:11px;line-height:11px;color:#000;letter-spacing:0.026px;word-spacing:-0.026px;">2,00</span>
<span class="t" style="left:627.00px;top:439.69px;font-size:11px;line-height:11px;color:#000;letter-spacing:0.117px;word-spacing:-0.117px;">20,00</span>
<span class="t" style="left:664.00px;top:439.69px;font-size:11px;line-height:11px;color:#000;letter-spacing:0.117px;word-spacing:-0.117px;">20,00</span>
<span class="t" style="left:721.50px;top:439.69px;font-size:11px;line-height:11px;color:#000;letter-spacing:0.117px;word-spacing:-0.117px;">24,00</span>
<svg style="position:absolute;left:31px;top:457px" width="16" height="16" viewBox="0 0 16 16"><path d="M0 4 L1.2 0 H14.8 L16 4 Z" fill="#e19b3f"/><rect x="0" y="4" width="16" height="12" fill="#f0a84c"/><rect x="6" y="0" width="4" height="4" fill="#e8b84a"/><rect x="6" y="4" width="4" height="1.8" fill="#f7cb66"/><rect x="0.6" y="13" width="5" height="2" fill="#e9b94f"/></svg>
<span class="t" style="left:54.00px;top:458.69px;font-size:11px;line-height:11px;color:#000;letter-spacing:-0.396px;word-spacing:0.396px;transform:scaleX(0.8767);transform-origin:0 0;">CAROTTE</span>
<span class="t" style="left:126.00px;top:458.69px;font-size:11px;line-height:11px;color:#000;letter-spacing:0.118px;word-spacing:-0.118px;">BLIVR 3 - Carottes de qualité supérieure</span>
<span class="t" style="left:472.00px;top:458.69px;font-size:11px;line-height:11px;color:#000;letter-spacing:0.117px;word-spacing:-0.117px;">10,00</span>
<span class="t" style="left:522.00px;top:458.69px;font-size:11px;line-height:11px;color:#000;letter-spacing:0.117px;word-spacing:-0.117px;">12,00</span>
<span class="t" style="left:578.00px;top:458.69px;font-size:11px;line-height:11px;color:#000;letter-spacing:0.026px;word-spacing:-0.026px;">1,00</span>
<span class="t" style="left:627.00px;top:458.69px;font-size:11px;line-height:11px;color:#000;letter-spacing:0.117px;word-spacing:-0.117px;">10,00</span>
<span class="t" style="left:664.00px;top:458.69px;font-size:11px;line-height:11px;color:#000;letter-spacing:0.117px;word-spacing:-0.117px;">20,00</span>
<span class="t" style="left:721.50px;top:458.69px;font-size:11px;line-height:11px;color:#000;letter-spacing:0.117px;word-spacing:-0.117px;">12,00</span>
<svg style="position:absolute;left:31px;top:476px" width="16" height="16" viewBox="0 0 16 16"><path d="M0 4 L1.2 0 H14.8 L16 4 Z" fill="#e19b3f"/><rect x="0" y="4" width="16" height="12" fill="#f0a84c"/><rect x="6" y="0" width="4" height="4" fill="#e8b84a"/><rect x="6" y="4" width="4" height="1.8" fill="#f7cb66"/><rect x="0.6" y="13" width="5" height="2" fill="#e9b94f"/></svg>
<span class="t" style="left:54.00px;top:477.69px;font-size:11px;line-height:11px;color:#000;letter-spacing:-0.396px;word-spacing:0.396px;transform:scaleX(0.8880);transform-origin:0 0;">POMME</span>
<span class="t" style="left:126.00px;top:477.69px;font-size:11px;line-height:11px;color:#000;letter-spacing:-0.396px;word-spacing:0.396px;transform:scaleX(0.9565);transform-origin:0 0;">BLIVR 3 - Pommes</span>
<span class="t" style="left:472.00px;top:477.69px;font-size:11px;line-height:11px;color:#000;letter-spacing:0.117px;word-spacing:-0.117px;">10,00</span>
<span class="t" style="left:522.00px;top:477.69px;font-size:11px;line-height:11px;color:#000;letter-spacing:0.117px;word-spacing:-0.117px;">12,00</span>
<span class="t" style="left:578.00px;top:477.69px;font-size:11px;line-height:11px;color:#000;letter-spacing:0.026px;word-spacing:-0.026px;">2,00</span>
<span class="t" style="left:627.00px;top:477.69px;font-size:11px;line-height:11px;color:#000;letter-spacing:0.117px;word-spacing:-0.117px;">20,00</span>
<span class="t" style="left:664.00px;top:477.69px;font-size:11px;line-height:11px;color:#000;letter-spacing:0.117px;word-spacing:-0.117px;">20,00</span>
<span class="t" style="left:721.50px;top:477.69px;font-size:11px;line-height:11px;color:#000;letter-spacing:0.117px;word-spacing:-0.117px;">24,00</span>
<svg style="position:absolute;left:31px;top:495px" width="16" height="16" viewBox="0 0 16 16"><path d="M0 4 L1.2 0 H14.8 L16 4 Z" fill="#e19b3f"/><rect x="0" y="4" width="16" height="12" fill="#f0a84c"/><rect x="6" y="0" width="4" height="4" fill="#e8b84a"/><rect x="6" y="4" width="4" height="1.8" fill="#f7cb66"/><rect x="0.6" y="13" width="5" height="2" fill="#e9b94f"/></svg>
<span class="t" style="left:54.00px;top:496.69px;font-size:11px;line-height:11px;color:#000;letter-spacing:-0.396px;word-spacing:0.396px;transform:scaleX(0.8767);transform-origin:0 0;">CAROTTE</span>
<span class="t" style="left:126.00px;top:496.69px;font-size:11px;line-height:11px;color:#000;letter-spacing:0.118px;word-spacing:-0.118px;">BLIVR 4 - Carottes de qualité supérieure</span>
<span class="t" style="left:472.00px;top:496.69px;font-size:11px;line-height:11px;color:#000;letter-spacing:0.117px;word-spacing:-0.117px;">10,00</span>
<span class="t" style="left:522.00px;top:496.69px;font-size:11px;line-height:11px;color:#000;letter-spacing:0.117px;word-spacing:-0.117px;">12,00</span>
<span class="t" style="left:578.00px;top:496.69px;font-size:11px;line-height:11px;color:#000;letter-spacing:0.026px;word-spacing:-0.026px;">2,00</span>
<span class="t" style="left:627.00px;top:496.69px;font-size:11px;line-height:11px;color:#000;letter-spacing:0.117px;word-spacing:-0.117px;">20,00</span>
<span class="t" style="left:664.00px;top:496.69px;font-size:11px;line-height:11px;color:#000;letter-spacing:0.117px;word-spacing:-0.117px;">20,00</span>
<span class="t" style="left:721.50px;top:496.69px;font-size:11px;line-height:11px;color:#000;letter-spacing:0.117px;word-spacing:-0.117px;">24,00</span>
<svg style="position:absolute;left:31px;top:514px" width="16" height="16" viewBox="0 0 16 16"><path d="M0 4 L1.2 0 H14.8 L16 4 Z" fill="#e19b3f"/><rect x="0" y="4" width="16" height="12" fill="#f0a84c"/><rect x="6" y="0" width="4" height="4" fill="#e8b84a"/><rect x="6" y="4" width="4" height="1.8" fill="#f7cb66"/><rect x="0.6" y="13" width="5" height="2" fill="#e9b94f"/></svg>
<span class="t" style="left:54.00px;top:515.69px;font-size:11px;line-height:11px;color:#000;letter-spacing:-0.396px;word-spacing:0.396px;transform:scaleX(0.8713);transform-origin:0 0;-webkit-text-stroke:0.12px #000;">TREZ</span>
<span class="t" style="left:126.00px;top:515.69px;font-size:11px;line-height:11px;color:#000;letter-spacing:-0.092px;word-spacing:0.092px;-webkit-text-stroke:0.12px #000;">BLIVR 4 - Navets ronds</span>
<span class="t" style="left:472.00px;top:515.69px;font-size:11px;line-height:11px;color:#000;letter-spacing:0.117px;word-spacing:-0.117px;-webkit-text-stroke:0.12px #000;">10,00</span>
<span class="t" style="left:522.00px;top:515.69px;font-size:11px;line-height:11px;color:#000;letter-spacing:0.117px;word-spacing:-0.117px;-webkit-text-stroke:0.12px #000;">12,00</span>
<span class="t" style="left:578.00px;top:515.69px;font-size:11px;line-height:11px;color:#000;letter-spacing:0.026px;word-spacing:-0.026px;-webkit-text-stroke:0.12px #000;">5,00</span>
<span class="t" style="left:627.00px;top:515.69px;font-size:11px;line-height:11px;color:#000;letter-spacing:0.117px;word-spacing:-0.117px;-webkit-text-stroke:0.12px #000;">50,00</span>
<span class="t" style="left:664.00px;top:515.69px;font-size:11px;line-height:11px;color:#000;letter-spacing:0.117px;word-spacing:-0.117px;-webkit-text-stroke:0.12px #000;">20,00</span>
<span class="t" style="left:721.50px;top:515.69px;font-size:11px;line-height:11px;color:#000;letter-spacing:0.117px;word-spacing:-0.117px;-webkit-text-stroke:0.12px #000;">60,00</span>
<svg style="position:absolute;left:31px;top:533px" width="16" height="16" viewBox="0 0 16 16"><path d="M0 4 L1.2 0 H14.8 L16 4 Z" fill="#e19b3f"/><rect x="0" y="4" width="16" height="12" fill="#f0a84c"/><rect x="6" y="0" width="4" height="4" fill="#e8b84a"/><rect x="6" y="4" width="4" height="1.8" fill="#f7cb66"/><rect x="0.6" y="13" width="5" height="2" fill="#e9b94f"/></svg>
<span class="t" style="left:54.00px;top:534.69px;font-size:11px;line-height:11px;color:#000;letter-spacing:-0.396px;word-spacing:0.396px;transform:scaleX(0.8880);transform-origin:0 0;">POMME</span>
<span class="t" style="left:126.00px;top:534.69px;font-size:11px;line-height:11px;color:#000;letter-spacing:-0.396px;word-spacing:0.396px;transform:scaleX(0.9565);transform-origin:0 0;">BLIVR 4 - Pommes</span>
<span class="t" style="left:472.00px;top:534.69px;font-size:11px;line-height:11px;color:#000;letter-spacing:0.117px;word-spacing:-0.117px;">10,00</span>
<span class="t" style="left:522.00px;top:534.69px;font-size:11px;line-height:11px;color:#000;letter-spacing:0.117px;word-spacing:-0.117px;">12,00</span>
<span class="t" style="left:578.00px;top:534.69px;font-size:11px;line-height:11px;color:#000;letter-spacing:0.026px;word-spacing:-0.026px;">3,00</span>
<span class="t" style="left:627.00px;top:534.69px;font-size:11px;line-height:11px;color:#000;letter-spacing:0.117px;word-spacing:-0.117px;">30,00</span>
<span class="t" style="left:664.00px;top:534.69px;font-size:11px;line-height:11px;color:#000;letter-spacing:0.117px;word-spacing:-0.117px;">20,00</span>
<span class="t" style="left:721.50px;top:534.69px;font-size:11px;line-height:11px;color:#000;letter-spacing:0.117px;word-spacing:-0.117px;">36,00</span>
<div style="position:absolute;left:758px;top:437px;width:17px;height:220px;background:#f1f1f1;border-left:1px solid #e2e2e2;border-right:1px solid #e6e6e6;box-sizing:border-box"></div>
<svg style="position:absolute;left:762.5px;top:444px" width="8" height="4" viewBox="0 0 8 4"><path d="M0 4 L4 0 L8 4 Z" fill="#a6a6a6"/></svg>
<svg style="position:absolute;left:762.5px;top:646.6px" width="8" height="4" viewBox="0 0 8 4"><path d="M0 0 L4 4 L8 0 Z" fill="#7c7c7c"/></svg>
<div style="position:absolute;left:781px;top:417px;width:24px;height:24px;border-radius:3px;background:#035291"></div>
<div style="position:absolute;left:781px;top:445px;width:24px;height:24px;border-radius:3px;background:#035291"></div>
<div style="position:absolute;left:781px;top:473px;width:24px;height:24px;border-radius:3px;background:#035291"></div>
<div style="position:absolute;left:781px;top:502px;width:24px;height:24px;border-radius:3px;background:#c9c9c9"></div>
<svg style="position:absolute;left:781px;top:417px" width="24" height="24" viewBox="0 0 24 24"><path d="M12 6.6 V17.4 M6.6 12 H17.4" stroke="#fff" stroke-width="2.2"/></svg>
<svg style="position:absolute;left:781px;top:445px" width="24" height="24" viewBox="0 0 24 24"><g transform="rotate(48 12 12)"><rect x="10.6" y="4" width="2.9" height="2" rx="0.7" fill="#fff"/><rect x="10.6" y="6.6" width="2.9" height="8.8" fill="#fff"/><path d="M10.6 16 H13.5 L12.05 19.4 Z" fill="#fff"/></g></svg>
<svg style="position:absolute;left:781.3px;top:473.8px" width="24" height="24" viewBox="0 0 24 24"><path d="M8 8.4 H16 M10.6 7.2 H13.4" stroke="#fff" stroke-width="1.4"/><path d="M8.8 9.6 H15.2 L14.7 17 H9.3 Z" fill="#fff"/><path d="M10.8 11 V15.8 M13.2 11 V15.8" stroke="#035291" stroke-width="0.9"/></svg>
<svg style="position:absolute;left:781px;top:502px" width="24" height="24" viewBox="0 0 24 24"><path d="M7 8.8 L12.1 14.6 L17.2 8.8" fill="none" stroke="#fff" stroke-width="3.2"/></svg>
<svg style="position:absolute;left:785px;top:559px" width="18" height="13" viewBox="0 0 18 13">
<rect x="3" y="3" width="12" height="7.6" fill="#d9d9d9"/>
<path d="M3.6 3 V10.6 M6.1 3 V10.6 M8.4 3 V10.6 M10.9 3 V10.6 M14.3 3 V10.6" stroke="#2c2c2c" stroke-width="1.2"/><path d="M12.6 3 V10.6" stroke="#555" stroke-width="0.7"/>
<rect x="1" y="6.2" width="16" height="1.4" fill="#b53a2c" opacity="0.9"/>
<path d="M1.4 3.2 V1.4 H3.6 M16.6 3.2 V1.4 H14.4 M1.4 9.8 V11.6 H3.6 M16.6 9.8 V11.6 H14.4" stroke="#e0604e" stroke-width="1.1" fill="none"/></svg>
<svg style="position:absolute;left:787px;top:634px" width="14" height="14" viewBox="0 0 14 14"><g fill="#2b3fae" stroke="#2b3fae" stroke-width="1.3">
<path d="M1 1 H4.4 L1 4.4 Z M13 1 H9.6 L13 4.4 Z M1 13 H4.4 L1 9.6 Z M13 13 H9.6 L13 9.6 Z" stroke="none"/><path d="M2 2 L5.2 5.2 M12 2 L8.8 5.2 M2 12 L5.2 8.8 M12 12 L8.8 8.8" fill="none"/></g></svg>
<svg style="position:absolute;left:807px;top:652px" width="12" height="12" viewBox="0 0 12 12"><rect x="9" y="1" width="2" height="2" fill="#d2d2d2"/><rect x="5" y="5" width="2" height="2" fill="#d2d2d2"/><rect x="9" y="5" width="2" height="2" fill="#d2d2d2"/><rect x="1" y="9" width="2" height="2" fill="#d2d2d2"/><rect x="5" y="9" width="2" height="2" fill="#d2d2d2"/><rect x="9" y="9" width="2" height="2" fill="#d2d2d2"/></svg>
</body></html>
